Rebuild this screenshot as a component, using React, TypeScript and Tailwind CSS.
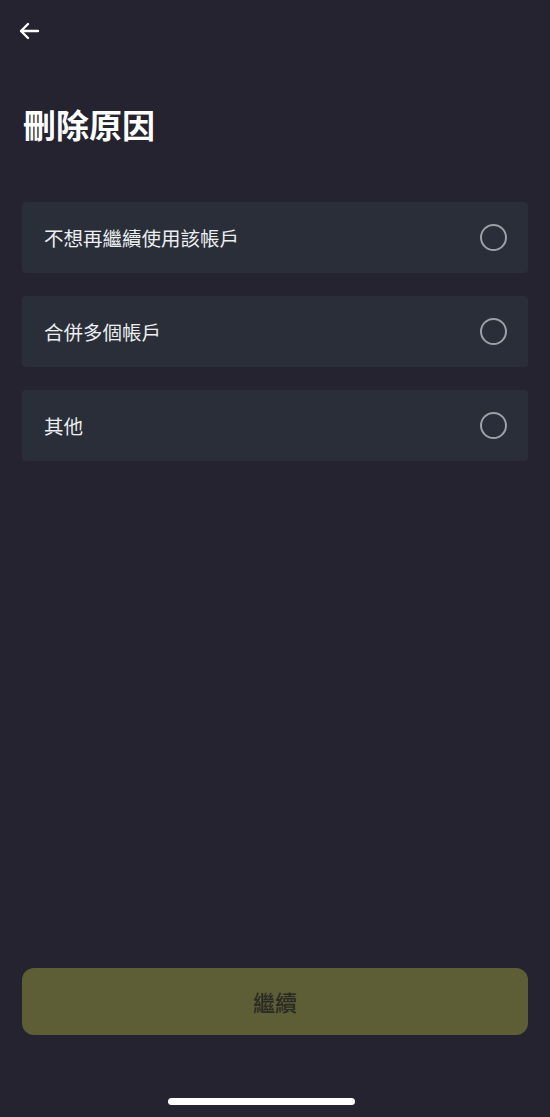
import { useState } from "react";

const reasons = ["不想再繼續使用該帳戶", "合併多個帳戶", "其他"];

const BackArrow = () => (
  <svg width="24" height="24" viewBox="0 0 24 24" fill="none">
    <path
      d="M21 12H4M11 5l-7 7 7 7"
      stroke="#ffffff"
      strokeWidth="2.4"
      strokeLinecap="round"
      strokeLinejoin="round"
    />
  </svg>
);

const App = () => {
  const [selected, setSelected] = useState<number | null>(null);

  return (
    <div
      className="w-[550px] h-[1117px] bg-[#24232f] flex flex-col"
      style={{ fontFamily: '"Noto Sans CJK TC", "Noto Sans", sans-serif' }}
    >
      <div className="pl-[16px] pt-[18px]">
        <button className="w-[26px] h-[26px] flex items-center justify-center">
          <BackArrow />
        </button>
      </div>
      <h1 className="mt-[59px] ml-[23px] text-[33px] leading-[42px] font-bold text-white">
        刪除原因
      </h1>
      <div className="mt-[57px] px-[22px] flex flex-col gap-[23px]">
        {reasons.map((reason, i) => (
          <button
            key={reason}
            onClick={() => setSelected(i)}
            className="h-[71px] bg-[#2a2e38] rounded-[4px] flex items-center justify-between pl-[22px] pr-[21px]"
          >
            <span className="text-[19.5px] text-[#eceef1]">{reason}</span>
            <span
              className={
                selected === i
                  ? "w-[27px] h-[27px] rounded-full border-[2px] border-[#f0b90b] flex items-center justify-center"
                  : "w-[27px] h-[27px] rounded-full border-[2px] border-[#9da0a6]"
              }
            >
              {selected === i && (
                <span className="w-[13px] h-[13px] rounded-full bg-[#f0b90b]" />
              )}
            </span>
          </button>
        ))}
      </div>
      <div className="flex-1" />
      <div className="px-[22px]">
        <button className="w-full h-[67px] rounded-[12px] bg-[#5e5e36] text-[22px] font-medium text-[#2a2a24]">
          繼續
        </button>
      </div>
      <div className="flex pl-[168px] pt-[63px] pb-[12px]">
        <div className="w-[187px] h-[7px] rounded-full bg-white" />
      </div>
    </div>
  );
};

export default App;
